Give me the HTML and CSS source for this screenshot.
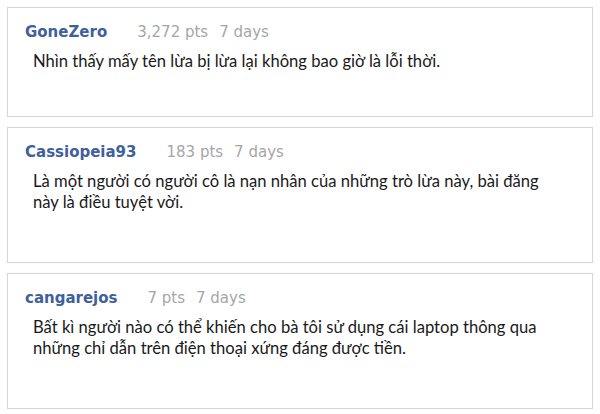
FILE: index.html
```html
<!DOCTYPE html>
<html lang="vi">
<head>
    <meta charset="UTF-8">
    <meta name="viewport" content="width=device-width, initial-scale=1.0">
    <title>Comments</title>
    <link rel="stylesheet" href="styles.css">
</head>
<body>
    <div class="comments">
        <div class="comment short">
            <div class="comment-head">
                <span class="user">GoneZero</span>
                <span class="meta">3,272 pts</span>
                <span class="meta">7 days</span>
            </div>
            <p class="comment-text">Nhìn thấy mấy tên lừa bị lừa lại không bao giờ là lỗi thời.</p>
        </div>

        <div class="comment">
            <div class="comment-head">
                <span class="user">Cassiopeia93</span>
                <span class="meta">183 pts</span>
                <span class="meta">7 days</span>
            </div>
            <p class="comment-text">Là một người có người cô là nạn nhân của những trò lừa này, bài đăng này là điều tuyệt vời.</p>
        </div>

        <div class="comment">
            <div class="comment-head">
                <span class="user">cangarejos</span>
                <span class="meta">7 pts</span>
                <span class="meta">7 days</span>
            </div>
            <p class="comment-text">Bất kì người nào có thể khiến cho bà tôi sử dụng cái laptop thông qua những chỉ dẫn trên điện thoại xứng đáng được tiền.</p>
        </div>
    </div>
</body>
</html>
```

FILE: styles.css
```css
body {
    margin: 0;
    padding: 7px;
    background-color: #fff;
}
.comments {
    display: flex;
    flex-direction: column;
    gap: 10px;
}
.comment {
    border: 1px solid #d6d6d6;
    padding: 15px 17px 0 17px;
    height: 136px;
    box-sizing: border-box;
    box-shadow: 0 0 1px rgba(0,0,0,0.05);
}
.comment.short {
    height: 110px;
}
.comment-head {
    display: flex;
    align-items: baseline;
    font-family: "DejaVu Sans", Verdana, sans-serif;
    font-size: 15px;
}
.user {
    color: #40609c;
    font-weight: bold;
    margin-right: 30px;
}
.meta {
    color: #a6a6a6;
    margin-right: 11px;
}
.comment-text {
    margin: 10px 0 0 8px;
    max-width: 520px;
    font-family: Lato, "Open Sans", sans-serif;
    font-size: 16.6px;
    line-height: 21px;
    color: #1a1a1a;
}
```
